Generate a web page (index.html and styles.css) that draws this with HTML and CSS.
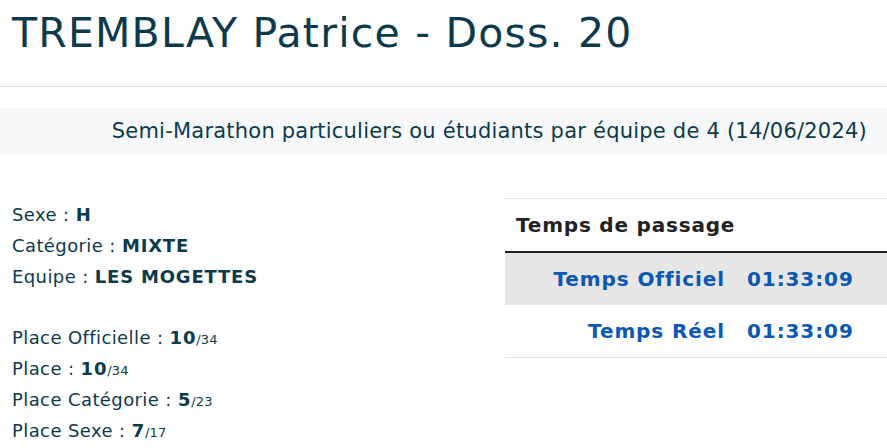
FILE: index.html
```html
<!DOCTYPE html>
<html lang="fr">
<head>
<meta charset="utf-8">
<title>TREMBLAY Patrice - Doss. 20</title>
<link rel="stylesheet" href="styles.css">
</head>
<body>
<header class="head">
  <h1 class="title">TREMBLAY Patrice - Doss. 20</h1>
</header>
<div class="band">Semi-Marathon particuliers ou étudiants par équipe de 4 (14/06/2024)</div>
<main class="content">
  <section class="info">
    <div class="line">Sexe : <b>H</b></div>
    <div class="line">Catégorie : <b>MIXTE</b></div>
    <div class="line">Equipe : <b>LES MOGETTES</b></div>
    <div class="line gap"></div>
    <div class="line">Place Officielle : <b>10</b><small>/34</small></div>
    <div class="line">Place : <b>10</b><small>/34</small></div>
    <div class="line">Place Catégorie : <b>5</b><small>/23</small></div>
    <div class="line">Place Sexe : <b>7</b><small>/17</small></div>
  </section>
  <section class="times">
    <table class="tbl">
      <thead>
        <tr><th colspan="2">Temps de passage</th></tr>
      </thead>
      <tbody>
        <tr class="odd"><td class="lbl">Temps Officiel</td><td class="val">01:33:09</td></tr>
        <tr><td class="lbl">Temps Réel</td><td class="val">01:33:09</td></tr>
      </tbody>
    </table>
  </section>
</main>
</body>
</html>
```
FILE: styles.css
```css
* { box-sizing: border-box; }
html, body { margin: 0; padding: 0; }
body {
  font-family: "DejaVu Sans", Verdana, sans-serif;
  color: #0d3a4a;
  background: #fff;
  width: 887px;
  overflow: hidden;
}
.head {
  border-bottom: 1px solid #dedede;
  padding: 9px 12px 0;
  height: 87px;
}
.title {
  margin: 0;
  font-weight: normal;
  font-size: 41px;
  letter-spacing: 1.2px;
  line-height: 48px;
  color: #0d3a4a;
}
.band {
  margin-top: 21px;
  height: 46px;
  background: #f6f8fa;
  text-align: right;
  padding-right: 20px;
  font-size: 21px;
  letter-spacing: 0.22px;
  line-height: 46px;
  color: #0d3a4a;
}
.content {
  display: grid;
  grid-template-columns: 505px 382px;
  padding-top: 44px;
}
.info {
  padding-left: 12px;
  font-size: 18px;
  letter-spacing: 0.4px;
  margin-top: 2px;
}
.line {
  height: 30.8px;
  line-height: 30.8px;
  white-space: nowrap;
}
.line b { font-weight: bold; letter-spacing: 0.8px; }
.line small { font-size: 13px; letter-spacing: 0.2px; }
.tbl {
  width: 100%;
  border-collapse: collapse;
  border-top: 1px solid #e2e2e2;
}
.tbl th {
  text-align: left;
  font-size: 20px;
  letter-spacing: 0.8px;
  color: #222;
  height: 53px;
  padding: 0 11px;
  border-bottom: 2px solid #222;
}
.tbl td {
  height: 53px;
  font-size: 20px;
  letter-spacing: 0.9px;
  font-weight: bold;
  color: #0b57b2;
  border-bottom: 1px solid #e2e2e2;
}
.tbl tr.odd td { background: #e6e6e6; border-bottom: none; }
.tbl td.lbl { text-align: right; width: 231px; padding-right: 11px; }
.tbl td.val { text-align: left; padding-left: 11px; }
```
